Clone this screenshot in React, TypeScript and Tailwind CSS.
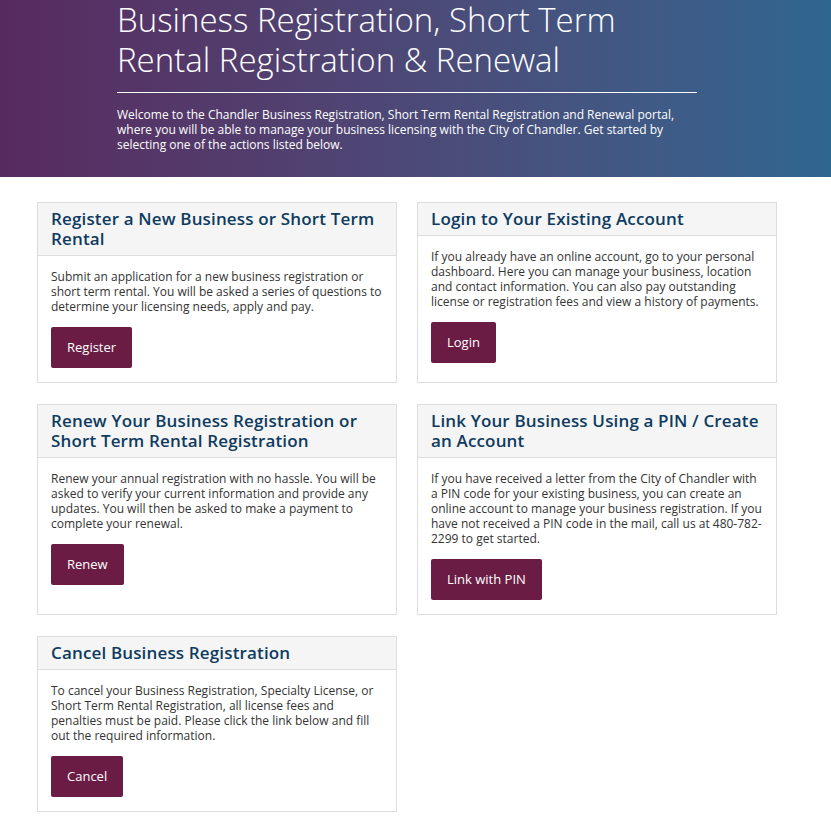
const cards = [
  {
    title: 'Register a New Business or Short Term Rental',
    body: 'Submit an application for a new business registration or short term rental. You will be asked a series of questions to determine your licensing needs, apply and pay.',
    action: 'Register',
  },
  {
    title: 'Login to Your Existing Account',
    body: 'If you already have an online account, go to your personal dashboard. Here you can manage your business, location and contact information. You can also pay outstanding license or registration fees and view a history of payments.',
    action: 'Login',
  },
  {
    title: 'Renew Your Business Registration or Short Term Rental Registration',
    body: 'Renew your annual registration with no hassle. You will be asked to verify your current information and provide any updates. You will then be asked to make a payment to complete your renewal.',
    action: 'Renew',
  },
  {
    title: 'Link Your Business Using a PIN / Create an Account',
    body: 'If you have received a letter from the City of Chandler with a PIN code for your existing business, you can create an online account to manage your business registration. If you have not received a PIN code in the mail, call us at 480-782-2299 to get started.',
    action: 'Link with PIN',
  },
  {
    title: 'Cancel Business Registration',
    body: 'To cancel your Business Registration, Specialty License, or Short Term Rental Registration, all license fees and penalties must be paid. Please click the link below and fill out the required information.',
    action: 'Cancel',
  },
];

function ActionCard({ title, body, action }: { title: string; body: string; action: string }) {
  return (
    <div className="flex flex-col border border-[#dddddd] bg-white">
      <div className="border-b border-[#dddddd] bg-[#f5f5f5] px-[13px] py-[6px]">
        <h2 className="text-[17px] leading-[20px] font-semibold tracking-[0.15px] text-[#0e3b5f]">{title}</h2>
      </div>
      <div className="px-[13px] pt-[13px] pb-[14px]">
        <p className="text-[12px] leading-[15px] text-[#333333]">{body}</p>
        <button className="mt-[13px] rounded-[2px] bg-[#6a1c45] px-[16px] py-[12px] text-[13px] leading-[17px] text-white">
          {action}
        </button>
      </div>
    </div>
  );
}

export default function App() {
  return (
    <div className="min-h-screen bg-white font-['Open_Sans',sans-serif]">
      {/* Banner */}
      <div className="h-[177px] bg-gradient-to-r from-[#572a5f] to-[#2e6690]">
        <div className="ml-[117px] w-[580px] text-white">
          <h1 className="text-[33px] leading-[40px] font-light">
            Business Registration, Short Term Rental Registration &amp; Renewal
          </h1>
          <hr className="mt-[12px] border-t border-white" />
          <p className="mt-[14px] text-[12px] leading-[15px]">
            Welcome to the Chandler Business Registration, Short Term Rental Registration and Renewal portal,
            where you will be able to manage your business licensing with the City of Chandler. Get started by
            selecting one of the actions listed below.
          </p>
        </div>
      </div>

      {/* Action cards */}
      <div className="ml-[37px] grid w-[740px] grid-cols-2 gap-x-[20px] gap-y-[21px] pt-[25px] pb-[20px]">
        {cards.map((c) => (
          <ActionCard key={c.action} {...c} />
        ))}
      </div>
    </div>
  );
}
